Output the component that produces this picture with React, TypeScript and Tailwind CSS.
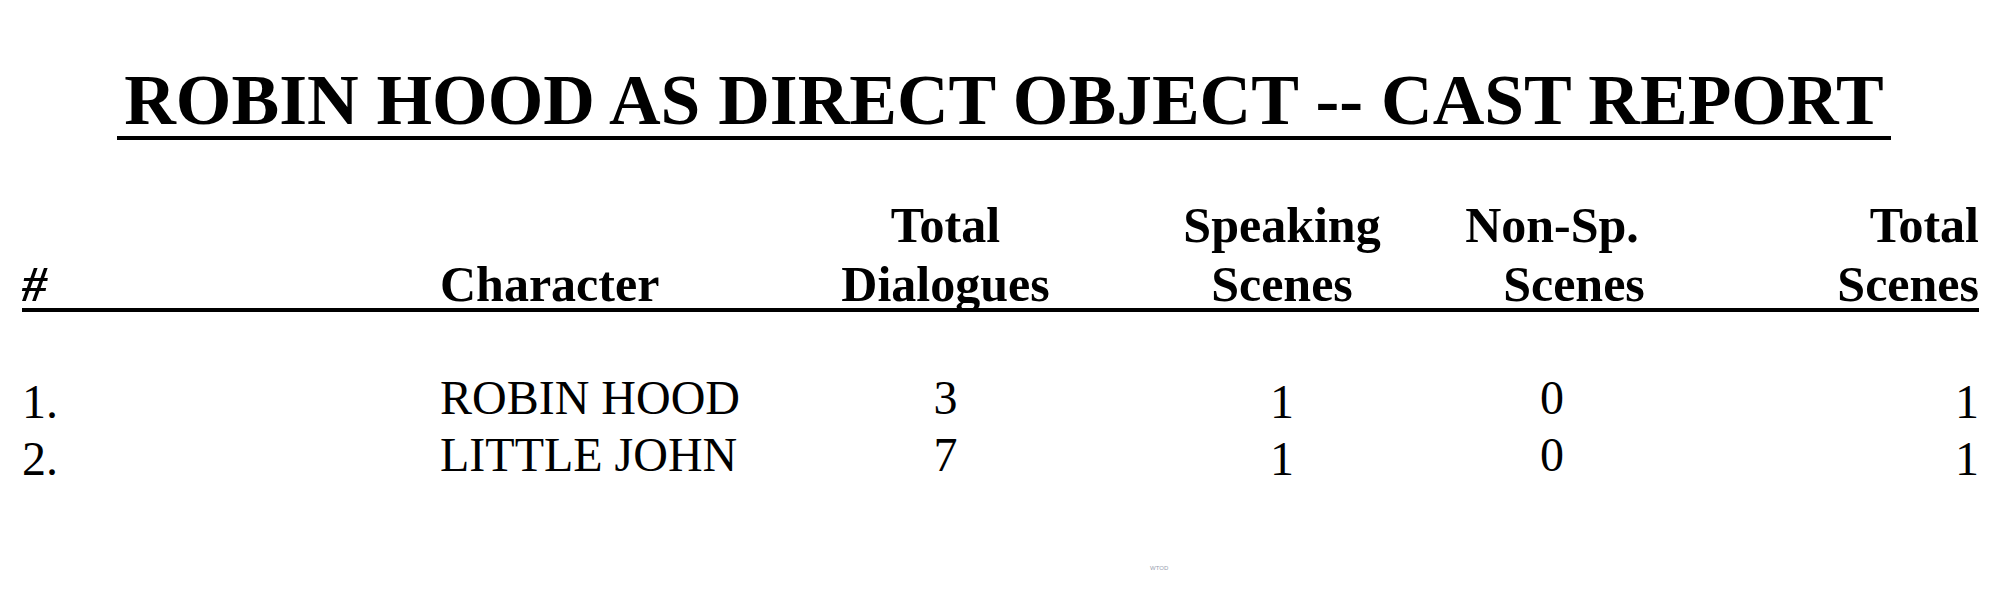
import React from "react";

const rows = [
  { n: "1.", name: "ROBIN HOOD", dlg: "3", sp: "1", nsp: "0", tot: "1" },
  { n: "2.", name: "LITTLE JOHN", dlg: "7", sp: "1", nsp: "0", tot: "1" },
];

export default function App() {
  return (
    <div className="w-[2000px] h-[600px] bg-white text-black font-['Liberation_Serif',serif] overflow-hidden">
      <div className="pt-[64px] pl-[8px] flex justify-center">
        <h1 className="inline-block px-[7px] text-[71.5px] leading-[72px] font-bold border-b-4 border-black whitespace-nowrap">
          ROBIN HOOD AS DIRECT OBJECT -- CAST REPORT
        </h1>
      </div>

      <div className="mt-[62px] pl-[22px] pr-[21px]">
        <div className="flex items-end border-b-4 border-black font-bold text-[50px]">
          <div className="w-[418px] leading-[47px] italic">#</div>
          <div className="w-[399px] leading-[47px]">Character</div>
          <div className="w-[213px] text-center whitespace-nowrap">
            <div className="leading-[47px]">Total</div>
            <div className="leading-[47px] mt-[12px]">Dialogues</div>
          </div>
          <div className="w-[407px] pl-[53px] text-center">
            <div className="leading-[47px]">Speaking</div>
            <div className="leading-[47px] mt-[12px]">Scenes</div>
          </div>
          <div className="w-[186px] text-center whitespace-nowrap">
            <div className="leading-[47px]">Non-Sp.</div>
            <div className="leading-[47px] mt-[12px] pl-[44px]">Scenes</div>
          </div>
          <div className="w-[334px] text-right">
            <div className="leading-[47px]">Total</div>
            <div className="leading-[47px] mt-[12px]">Scenes</div>
          </div>
        </div>

        <div className="mt-[57px] text-[48px]">
          {rows.map((r) => (
            <div key={r.n} className="flex items-start h-[57px] leading-[57px]">
              <div className="w-[418px] pt-[4px]">{r.n}</div>
              <div className="w-[399px] whitespace-nowrap">{r.name}</div>
              <div className="w-[213px] text-center">{r.dlg}</div>
              <div className="w-[407px] pl-[53px] text-center pt-[4px]">{r.sp}</div>
              <div className="w-[186px] text-center">{r.nsp}</div>
              <div className="w-[334px] text-right pt-[4px]">{r.tot}</div>
            </div>
          ))}
        </div>
      </div>

      <div className="mt-[82px] pl-[1150px] text-[6px] leading-[6px] text-gray-400 font-['Liberation_Sans',sans-serif]">
        WTOD
      </div>
    </div>
  );
}
